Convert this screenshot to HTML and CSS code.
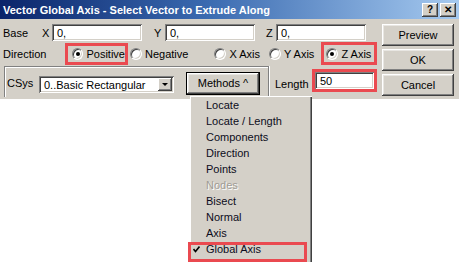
FILE: index.html
```html
<!DOCTYPE html>
<html lang="en">

<head>
    <meta charset="UTF-8">
    <title>Vector Global Axis</title>
    <link rel="stylesheet" href="styles.css">
</head>

<body>
    <div class="dialog">
        <div class="titlebar">
            <span class="title">Vector Global Axis - Select Vector to Extrude Along</span>
            <span class="capbtn help">?</span>
            <span class="capbtn close">✕</span>
        </div>
        <div class="content">
            <div class="fields">
                <div class="row row-base">
                    <span class="lbl lbl-base">Base</span>
                    <span class="lbl lbl-x">X</span>
                    <span class="input coord">0,</span>
                    <span class="lbl lbl-y">Y</span>
                    <span class="input coord">0,</span>
                    <span class="lbl lbl-z">Z</span>
                    <span class="input coord">0,</span>
                </div>
                <div class="row row-dir">
                    <span class="lbl lbl-dir">Direction</span>
                    <span class="redbox pos-box">
                        <span class="radio checked"></span><span class="rlbl">Positive</span>
                    </span>
                    <span class="radio r-neg"></span><span class="rlbl">Negative</span>
                    <span class="radio r-x"></span><span class="rlbl">X Axis</span>
                    <span class="radio r-y"></span><span class="rlbl">Y Axis</span>
                    <span class="redbox z-box">
                        <span class="radio checked"></span><span class="rlbl">Z Axis</span>
                    </span>
                </div>
                <div class="row row-csys">
                    <div class="group">
                        <span class="lbl lbl-csys">CSys</span>
                        <span class="input select">0..Basic Rectangular<span class="arrow"></span></span>
                        <span class="btn methods">Methods ^</span>
                    </div>
                    <span class="lbl lbl-len">Length</span>
                    <span class="redbox len-box"><span class="input len">50</span></span>
                </div>
            </div>
            <div class="buttons">
                <span class="btn">Preview</span>
                <span class="btn">OK</span>
                <span class="btn">Cancel</span>
            </div>
        </div>
    </div>

    <div class="menu">
        <div class="item">Locate</div>
        <div class="item">Locate / Length</div>
        <div class="item">Components</div>
        <div class="item">Direction</div>
        <div class="item">Points</div>
        <div class="item disabled">Nodes</div>
        <div class="item">Bisect</div>
        <div class="item">Normal</div>
        <div class="item">Axis</div>
        <div class="item checked">
            <svg class="check" width="7" height="7" viewBox="0 0 7 7"><path d="M0.5 3 L2.5 5.5 L6.5 0.5" fill="none" stroke="#000" stroke-width="1.6"/></svg>
            Global Axis
            <span class="mark"></span>
        </div>
    </div>
</body>

</html>
```

FILE: styles.css
```css
* {
    margin: 0;
    padding: 0;
    box-sizing: border-box;
}

body {
    background-color: #ffffff;
    font-family: "Liberation Sans", Arial, sans-serif;
    font-size: 11px;
    color: #000;
    width: 459px;
    height: 262px;
    overflow: hidden;
    position: relative;
}

.dialog {
    width: 459px;
    height: 99px;
    background-color: #d4d0c8;
}

.titlebar {
    height: 19px;
    display: flex;
    align-items: center;
    padding-left: 3px;
    background: linear-gradient(90deg, #0a246a 0%, #3a6ab0 45%, #a6caf0 100%);
}

.title {
    color: #fff;
    font-weight: bold;
    font-size: 11px;
    flex: 1;
}

.capbtn {
    width: 16px;
    height: 14px;
    background-color: #d4d0c8;
    box-shadow: inset -1px -1px #404040, inset 1px 1px #fff, inset -2px -2px #808080;
    font-weight: bold;
    font-size: 10px;
    display: flex;
    align-items: center;
    justify-content: center;
}

.help {
    margin-right: 2px;
}

.close {
    margin-right: 3px;
}

.content {
    display: flex;
    padding-top: 5px;
}

.fields {
    width: 382px;
}

.row {
    display: flex;
    align-items: center;
}

.row-base {
    height: 17px;
}

.lbl-base {
    width: 39px;
    padding-left: 3px;
    box-sizing: content-box;
}

.lbl-x {
    width: 10px;
}

.lbl-y {
    width: 11px;
    margin-left: 12px;
}

.lbl-z {
    width: 10px;
    margin-left: 11px;
}

.input {
    background-color: #fff;
    box-shadow: inset 1px 1px #808080, inset -1px -1px #fff, inset 2px 2px #404040, inset -2px -2px #d4d0c8;
    padding-left: 5px;
    display: flex;
    align-items: center;
}

.coord {
    width: 90px;
    height: 17px;
}

.row-dir {
    height: 23px;
    margin-top: 1px;
}

.lbl-dir {
    width: 62px;
    padding-left: 3px;
    box-sizing: content-box;
}

.redbox {
    border: 3px solid #ea4a50;
    display: flex;
    align-items: center;
}

.pos-box {
    width: 63px;
    height: 22px;
    padding-left: 4px;
}

.z-box {
    width: 56px;
    height: 23px;
    padding-left: 2px;
    margin-left: 7px;
}

.radio {
    width: 12px;
    height: 12px;
    border-radius: 50%;
    background-color: #fff;
    border: 1px solid #808080;
    border-right-color: #fff;
    border-bottom-color: #fff;
    box-shadow: inset 1px 1px #404040, inset -1px -1px #d4d0c8;
    display: flex;
    align-items: center;
    justify-content: center;
}

.radio.checked::after {
    content: "";
    width: 4px;
    height: 4px;
    border-radius: 50%;
    background-color: #000;
}

.rlbl {
    margin-left: 3px;
}

.r-neg {
    margin-left: 2px;
}

.r-x {
    margin-left: 26px;
}

.r-y {
    margin-left: 9px;
}

.row-csys {
    height: 31px;
    margin-top: 1px;
    align-items: stretch;
}

.group {
    margin-left: 4px;
    width: 265px;
    border-top: 1px solid #808080;
    border-left: 1px solid #808080;
    border-right: 1px solid #808080;
    box-shadow: inset 1px 1px #fff, 1px 0 #fff;
    display: flex;
    align-items: center;
    padding-top: 2px;
}

.lbl-csys {
    width: 34px;
    padding-left: 2px;
}

.select {
    width: 135px;
    height: 17px;
    position: relative;
    margin-top: 3px;
}

.arrow {
    position: absolute;
    right: 2px;
    top: 2px;
    width: 14px;
    height: 13px;
    background-color: #d4d0c8;
    box-shadow: inset -1px -1px #404040, inset 1px 1px #fff, inset -2px -2px #808080;
}

.arrow::after {
    content: "";
    position: absolute;
    left: 4px;
    top: 5px;
    border-left: 3px solid transparent;
    border-right: 3px solid transparent;
    border-top: 3px solid #000;
}

.btn {
    background-color: #d4d0c8;
    box-shadow: inset -1px -1px #404040, inset 1px 1px #fff, inset -2px -2px #808080, inset 2px 2px #e8e6e2;
    display: flex;
    align-items: center;
    justify-content: center;
    width: 72px;
    height: 22px;
}

.methods {
    margin-left: 12px;
    width: 74px;
    height: 23px;
    border: 1px solid #000;
}

.lbl-len {
    margin-left: 6px;
    width: 37px;
    align-self: center;
    margin-top: 4px;
}

.len-box {
    width: 65px;
    height: 23px;
    margin-top: 3px;
}

.len {
    width: 59px;
    height: 17px;
}

.buttons {
    width: 72px;
    display: flex;
    flex-direction: column;
    gap: 3px;
}

.menu {
    position: absolute;
    left: 190px;
    top: 96px;
    width: 122px;
    height: 170px;
    background-color: #d4d0c8;
    box-shadow: inset 1px 1px #fff, inset -1px 0 #404040, inset -2px 0 #808080;
    padding-top: 1px;
}

.item {
    height: 16px;
    padding-left: 16px;
    display: flex;
    align-items: center;
    color: #0c0c20;
    position: relative;
}

.item.disabled {
    color: #a09c94;
    text-shadow: 1px 1px #fff;
}

.check {
    position: absolute;
    left: 3px;
    top: 5px;
}

.mark {
    position: absolute;
    left: -2px;
    top: 1px;
    width: 119px;
    height: 20px;
    border: 3px solid #ea4a50;
}
```
